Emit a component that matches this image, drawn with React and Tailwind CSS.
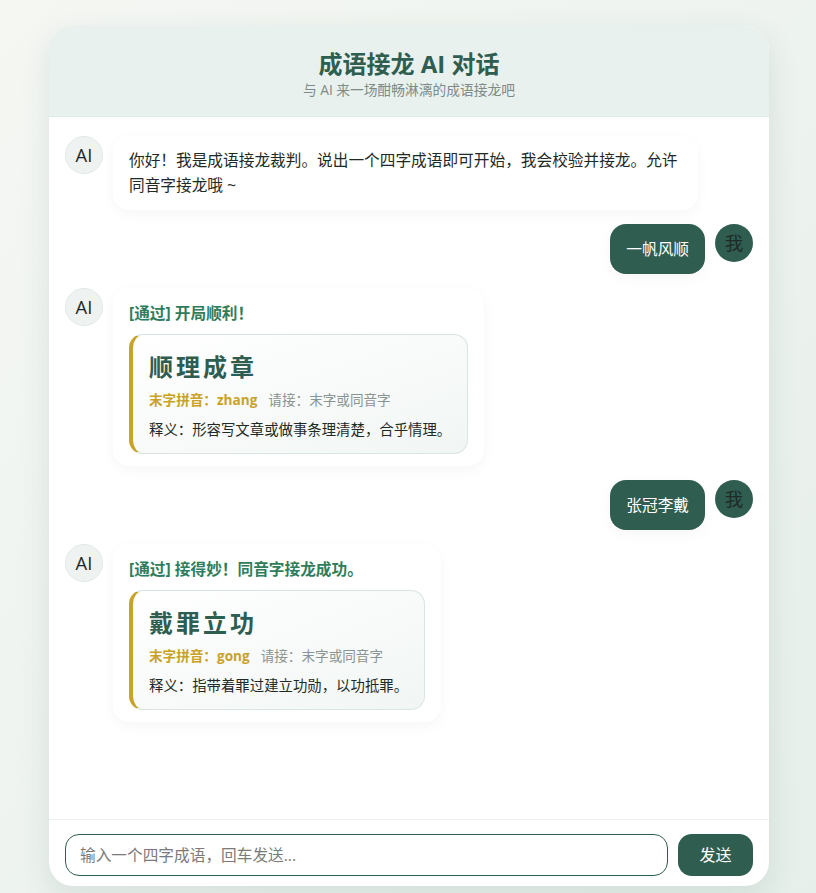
import React from 'react';

const font = "font-['Open_Sans','Noto_Sans_CJK_SC',sans-serif]";

const AiAvatar = () => (
  <div className="flex h-[38px] w-[38px] shrink-0 items-center justify-center rounded-full border border-[#dfe9e5] bg-[#eef3f1] text-[18.4px] text-[#1f2a27]">
    AI
  </div>
);

const UserMessage = ({ text }) => (
  <div className="flex justify-end gap-[10px]">
    <div className="rounded-[16px] bg-[#2f5d50] px-4 py-3 text-[15.68px] leading-[26px] text-white shadow-[0_4px_14px_rgba(0,0,0,0.04)]">
      {text}
    </div>
    <div className="flex h-[38px] w-[38px] shrink-0 items-center justify-center rounded-full bg-[#2f5d50] text-[18.4px] text-[#1f2a27]">
      我
    </div>
  </div>
);

const AiBubble = ({ children }) => (
  <div className="flex gap-[10px]">
    <AiAvatar />
    <div className="rounded-[16px] bg-white px-4 py-3 text-[15.68px] leading-[25px] text-[#1f2a27] shadow-[0_4px_14px_rgba(0,0,0,0.04)]">
      {children}
    </div>
  </div>
);

const IdiomCard = ({ verdict, idiom, pinyin, meaning }) => (
  <AiBubble>
    <div className="pt-px font-bold text-[#2f7d5b]">{verdict}</div>
    <div className="mt-[8px] rounded-[14px] border border-l-4 border-[#d9e5e1] border-l-[#c9a227] bg-gradient-to-br from-white to-[#f1f6f4] pt-[11px] pr-4 pb-[12px] pl-4">
      <div className="text-[24px] leading-[42px] font-bold tracking-[3px] text-[#2f5d50]">{idiom}</div>
      <div className="mt-[1px] flex gap-[11px] text-[13.6px] leading-[22px]">
        <span className="font-bold text-[#c9a227]">末字拼音：{pinyin}</span>
        <span className="text-[#8a9490]">请接：末字或同音字</span>
      </div>
      <div className="mt-[8px] text-[14.4px] leading-[22px] text-[#1f2a27]">释义：{meaning}</div>
    </div>
  </AiBubble>
);

export default function App() {
  return (
    <div className={`flex h-[893px] justify-center bg-gradient-to-br from-[#f5f7f3] to-[#e6efea] pt-[26px] pl-[2px] ${font}`}>
      <div className="flex h-[860px] w-[720px] flex-col overflow-hidden rounded-[24px] bg-white shadow-[0_10px_30px_rgba(47,93,80,0.12)]">
        <div className="h-[91px] shrink-0 border-b border-[#dfe9e5] bg-[#e8f1ed] pt-[22px] text-center">
          <div className="text-[24px] leading-[32px] font-bold text-[#2f5d50]">成语接龙 AI 对话</div>
          <div className="text-[13.76px] leading-[20px] text-[#7f8b87]">与 AI 来一场酣畅淋漓的成语接龙吧</div>
        </div>

        <div className="flex flex-1 flex-col gap-[14px] px-4 pt-[19px]">
          <AiBubble>
            <div className="w-[553px]">你好！我是成语接龙裁判。说出一个四字成语即可开始，我会校验并接龙。允许同音字接龙哦 ~</div>
          </AiBubble>
          <UserMessage text="一帆风顺" />
          <IdiomCard
            verdict="[通过] 开局顺利！"
            idiom="顺理成章"
            pinyin="zhang"
            meaning="形容写文章或做事条理清楚，合乎情理。"
          />
          <UserMessage text="张冠李戴" />
          <IdiomCard
            verdict="[通过] 接得妙！同音字接龙成功。"
            idiom="戴罪立功"
            pinyin="gong"
            meaning="指带着罪过建立功勋，以功抵罪。"
          />
        </div>

        <div className="flex h-[67px] shrink-0 gap-[10px] border-t border-[#edf1ef] px-4 pt-[14px]">
          <input
            placeholder="输入一个四字成语，回车发送..."
            className="h-[42px] flex-1 rounded-[14px] border border-[#2f5d50] px-[14px] text-[15.68px] outline-none placeholder:text-[#7b7b7b]"
          />
          <button className="h-[42px] w-[75px] rounded-[14px] bg-[#2f5d50] text-[16px] text-white">发送</button>
        </div>
      </div>
    </div>
  );
}
